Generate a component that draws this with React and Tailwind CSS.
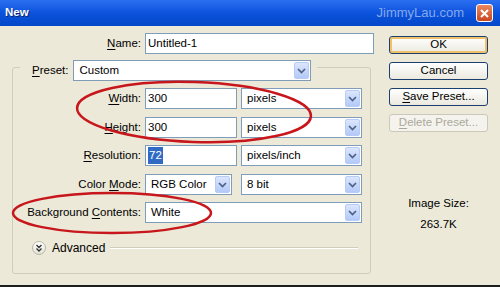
import React from "react";

const Chevron = () => (
  <svg width="9" height="6" viewBox="0 0 9 6">
    <path d="M1 1l3.5 3.5L8 1" fill="none" stroke="#4d6185" strokeWidth="1.7" />
  </svg>
);

const DropBtn = () => (
  <div className="w-[15px] h-[17px] rounded-[2px] border border-[#b7cbf7] bg-gradient-to-b from-[#dce6fd] to-[#b3c9f8] flex items-center justify-center shrink-0">
    <Chevron />
  </div>
);

const Input = ({ children, className = "" }) => (
  <div className={`h-[21px] border border-[#7f9db9] bg-white flex items-center pl-[2px] ${className}`}>
    {children}
  </div>
);

const Select = ({ value, className = "" }) => (
  <div className={`h-[21px] border border-[#7f9db9] bg-white flex items-center justify-between pl-[5px] pr-[1px] ${className}`}>
    <span>{value}</span>
    <DropBtn />
  </div>
);

// label with access-key letter underlined
const Label = ({ pre = "", k, post, className = "" }) => (
  <div className={`text-right whitespace-nowrap ${className}`}>
    {pre}
    <span className="underline underline-offset-2">{k}</span>
    {post}
  </div>
);

const Button = ({ children, variant }) => {
  if (variant === "disabled") {
    return (
      <div className="h-[18px] rounded-[3px] border border-[#cbc8b9] bg-[#f4f3ee] text-[#aca899] flex items-center justify-center">
        {children}
      </div>
    );
  }
  return (
    <div
      className={`h-[18px] rounded-[3px] border border-[#1c3f70] bg-gradient-to-b from-white to-[#ebe9df] flex items-center justify-center ${
        variant === "default" ? "shadow-[inset_0_0_0_2px_#efc16b]" : ""
      }`}
    >
      {children}
    </div>
  );
};

const Row = ({ label, children, className = "" }) => (
  <div className={`flex items-center h-[21px] ${className}`}>
    <div className="w-[128px] shrink-0">{label}</div>
    {children}
  </div>
);

export default function App() {
  return (
    <div className="w-[500px] h-[287px] bg-[#ece9d8] flex flex-col relative overflow-hidden text-[11.5px] text-black font-['Liberation_Sans',Arial,sans-serif]">
      {/* title bar */}
      <div className="h-[26px] shrink-0 bg-gradient-to-b from-[#2a6ff0] via-[#0b52dd] to-[#0448c8] flex items-center pl-[5px] pr-[7px]">
        <span className="text-white font-bold text-[11.5px] [text-shadow:1px_1px_0_#0b1f6b]">New</span>
        <span className="ml-auto mr-[12px] text-[13px] text-[#86a9ec]">JimmyLau.com</span>
        <div className="w-[17px] h-[18px] rounded-[3px] border border-white bg-gradient-to-b from-[#e9885f] to-[#c8451d] flex items-center justify-center">
          <svg width="9" height="9" viewBox="0 0 9 9">
            <path d="M1 1l7 7M8 1L1 8" stroke="white" strokeWidth="2" />
          </svg>
        </div>
      </div>

      {/* body */}
      <div className="flex flex-1 border-b-2 border-[#1e1e1e]">
        <div className="w-[389px] shrink-0">
          <div className="flex items-center h-[21px] mt-[7px]">
            <Label k="N" post="ame:" className="w-[141px]" />
            <Input className="ml-[4px] w-[229px]">Untitled-1</Input>
          </div>

          <div className="ml-[12px] mt-[13px] w-[359px] h-[207px] border border-[#cfcdbd] rounded-[3px]">
            <div className="-mt-[8px] ml-[7px] w-[297px] bg-[#ece9d8] flex items-center h-[21px] pl-[12px] pr-[6px]">
              <Label k="P" post="reset:" />
              <Select value="Custom" className="ml-[5px] flex-1" />
            </div>

            <Row label={<Label k="W" post="idth:" />} className="mt-[7px]">
              <Input className="ml-[4px] w-[92px]">300</Input>
              <Select value="pixels" className="ml-[4px] w-[121px]" />
            </Row>
            <Row label={<Label k="H" post="eight:" />} className="mt-[8px]">
              <Input className="ml-[4px] w-[92px]">300</Input>
              <Select value="pixels" className="ml-[4px] w-[121px]" />
            </Row>
            <Row label={<Label k="R" post="esolution:" />} className="mt-[7px]">
              <Input className="ml-[4px] w-[92px]">
                <span className="bg-[#316ac5] text-white px-[1px]">72</span>
              </Input>
              <Select value="pixels/inch" className="ml-[4px] w-[121px]" />
            </Row>
            <Row label={<Label pre="Color " k="M" post="ode:" />} className="mt-[8px]">
              <Select value="RGB Color" className="ml-[4px] w-[87px]" />
              <Select value="8 bit" className="ml-[9px] w-[121px]" />
            </Row>
            <Row label={<Label pre="Background " k="C" post="ontents:" />} className="mt-[7px]">
              <Select value="White" className="ml-[4px] w-[217px]" />
            </Row>

            <div className="flex items-center mt-[18px] ml-[19px] h-[14px]">
              <div className="w-[14px] h-[14px] rounded-full border border-[#b9b6a5] bg-gradient-to-b from-white to-[#e4e2d6] flex items-center justify-center">
                <svg width="8" height="8" viewBox="0 0 8 8">
                  <path d="M1.5 1l2.5 2.5L6.5 1M1.5 4.5L4 7l2.5-2.5" fill="none" stroke="#333" strokeWidth="1.3" />
                </svg>
              </div>
              <span className="ml-[6px] text-[12px]">Advanced</span>
              <div className="ml-[5px] w-[248px] h-[2px] border-t border-[#cfcdbd] border-b border-b-white" />
            </div>
          </div>
        </div>

        <div className="w-[99px] shrink-0 pt-[10px] flex flex-col">
          <div className="flex flex-col gap-[8px]">
            <Button variant="default">OK</Button>
            <Button>Cancel</Button>
            <Button>
              <span className="underline underline-offset-2">S</span>ave Preset...
            </Button>
            <Button variant="disabled">
              <span className="underline underline-offset-2">D</span>elete Preset...
            </Button>
          </div>
          <div className="mt-[64px] text-center leading-[14px]">Image Size:</div>
          <div className="mt-[7px] text-center leading-[14px]">263.7K</div>
        </div>
      </div>

      {/* red annotation ellipses */}
      <svg className="absolute inset-0 pointer-events-none" width="500" height="287">
        <ellipse cx="194" cy="112" rx="117" ry="30" fill="none" stroke="#c7161c" strokeWidth="2.5" transform="rotate(2 194 112)" />
        <ellipse cx="112" cy="213" rx="99" ry="20" fill="none" stroke="#c7161c" strokeWidth="2.5" />
      </svg>
    </div>
  );
}
